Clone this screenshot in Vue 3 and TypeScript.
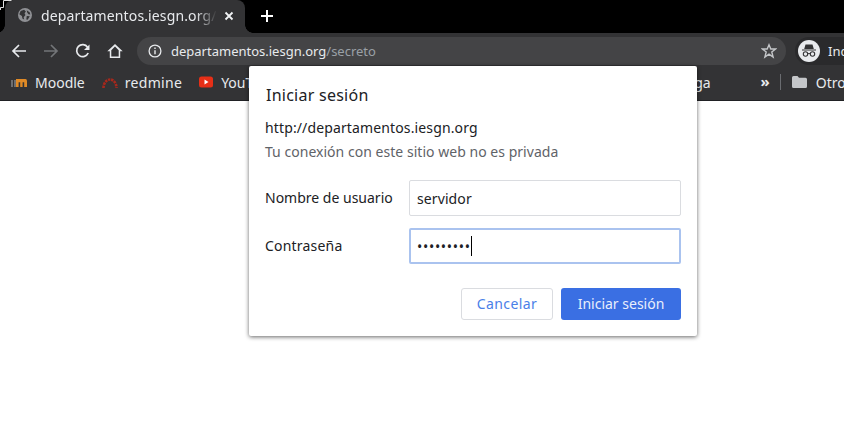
<script setup lang="ts">
const bookmarks = ['Moodle', 'redmine'];
</script>

<template>
  <div class="page">
    <div class="chrome">
      <div class="tabstrip">
        <svg class="corner" width="12" height="10" viewBox="0 0 12 10">
          <path d="M.5 10V7.5H3.5V.5H11.5" fill="none" stroke="#e0e0e0" stroke-width="1" />
        </svg>
        <div class="tab">
          <svg class="globe" width="14" height="14" viewBox="0 0 16 16">
            <circle cx="8" cy="8" r="8" fill="#8f9094" />
            <path d="M3 3.5 7 2 9 4 7.5 6 8.5 8 6.5 10.5 7 13 5 12 4.5 9 1.5 7ZM10 2.5 13.5 5 14 7.5 12 7 10.5 5ZM10 9 13.5 9.5 11 13.5 9.5 13Z" fill="#333335" />
          </svg>
          <span class="tab-title">departamentos.iesgn.org/</span>
          <svg class="close" width="10" height="10" viewBox="0 0 10 10">
            <path d="M1.5 1.5 8.5 8.5M8.5 1.5 1.5 8.5" stroke="#f1f3f4" stroke-width="1.8" />
          </svg>
        </div>
        <svg class="plus" width="14" height="14" viewBox="0 0 14 14">
          <path d="M7 1V13M1 7H13" stroke="#fff" stroke-width="2" />
        </svg>
      </div>
      <div class="toolbar">
        <svg class="tool" width="16" height="16" viewBox="0 0 16 16">
          <path d="M15 8H2.5M8 2 2 8 8 14" fill="none" stroke="#e8eaed" stroke-width="1.7" />
        </svg>
        <svg class="tool" width="16" height="16" viewBox="0 0 16 16">
          <path d="M1 8H13.5M8 2 14 8 8 14" fill="none" stroke="#737578" stroke-width="1.7" />
        </svg>
        <svg class="tool" width="16" height="16" viewBox="0 0 16 16">
          <path d="M13.2 10A6 6 0 1 1 12.6 4.2" fill="none" stroke="#e8eaed" stroke-width="1.7" />
          <path d="M14.5 1.5V7H9Z" fill="#e8eaed" />
        </svg>
        <svg class="tool" width="16" height="16" viewBox="0 0 16 16">
          <path d="M8 1 .3 8.3H2.8V15H13.2V8.3H15.7ZM4.3 13.5V7.2L8 3.5 11.7 7.2V13.5Z" fill="#e8eaed" />
        </svg>
        <div class="omnibox">
          <svg class="info" width="14" height="14" viewBox="0 0 14 14">
            <circle cx="7" cy="7" r="5.9" fill="none" stroke="#e8eaed" stroke-width="1.3" />
            <path d="M7 6.2V10.3M7 3.6V5" stroke="#e8eaed" stroke-width="1.4" />
          </svg>
          <span class="url">departamentos.iesgn.org<span class="url-path">/secreto</span></span>
          <svg class="star" width="16" height="16" viewBox="0 0 16 16">
            <path d="M8 1.8 9.8 6H14.6L10.8 9 12.1 14 8 11.2 3.9 14 5.2 9 1.4 6H6.2Z" fill="none" stroke="#c4c6c9" stroke-width="1.4" />
          </svg>
        </div>
        <div class="profile">
          <div class="avatar">
            <svg width="20" height="20" viewBox="0 0 20 20">
              <path d="M6.5 3.5H13.5L14.8 8H5.2ZM3 8.4H17V9.4H3Z" fill="#333335" />
              <circle cx="6.5" cy="13" r="2.2" fill="none" stroke="#333335" stroke-width="1.1" />
              <circle cx="13.5" cy="13" r="2.2" fill="none" stroke="#333335" stroke-width="1.1" />
              <path d="M8.7 12.6H11.3" stroke="#333335" stroke-width="1" />
            </svg>
          </div>
          <span class="profile-label">Incógnito</span>
        </div>
      </div>
      <div class="bookmarks">
        <div class="bookmark first">
          <svg width="16" height="12" viewBox="0 0 16 12">
            <path d="M0 4H2V11H0ZM3 4H5V11H3Z" fill="#6d6e70" />
            <path d="M5 3H14.5Q16 3 16 5V11H13.2V6.2H11.6V11H9.2V6.2H7.6V11H5Z" fill="#e08a26" />
          </svg>
          <span>{{ bookmarks[0] }}</span>
        </div>
        <div class="bookmark second">
          <svg width="18" height="14" viewBox="0 0 18 14">
            <path d="M2.5 13A6.5 8.5 0 0 1 15.5 13" fill="none" stroke="#a8281c" stroke-width="2.6" stroke-dasharray="2.4 .8" />
          </svg>
          <span>{{ bookmarks[1] }}</span>
        </div>
        <div class="bookmark third">
          <svg width="14" height="12" viewBox="0 0 14 12">
            <rect width="14" height="11" y=".5" rx="2.5" fill="#e62f17" />
            <path d="M5.5 3.5 9.5 6 5.5 8.5Z" fill="#fff" />
          </svg>
          <span>YouTube</span>
        </div>
        <span class="bookmark hidden-end">ga</span>
        <span class="chevrons">»</span>
        <span class="divider"></span>
        <div class="bookmark others">
          <svg width="15" height="12" viewBox="0 0 15 12">
            <path d="M0 1.5Q0 0 1.5 0H5.5L7 1.8H13.5Q15 1.8 15 3.3V10.5Q15 12 13.5 12H1.5Q0 12 0 10.5Z" fill="#c4c6c9" />
          </svg>
          <span>Otros marcadores</span>
        </div>
      </div>
    </div>

    <div class="dialog">
      <h1 class="title">Iniciar sesión</h1>
      <p class="origin">http://departamentos.iesgn.org</p>
      <p class="warning">Tu conexión con este sitio web no es privada</p>
      <div class="fields">
        <label class="label">Nombre de usuario</label>
        <div class="input">servidor</div>
        <label class="label wide">Contraseña</label>
        <div class="input focused"><span class="dots">•••••••••</span><span class="caret"></span></div>
      </div>
      <div class="actions">
        <button class="btn cancel">Cancelar</button>
        <button class="btn primary">Iniciar sesión</button>
      </div>
    </div>
  </div>
</template>

<style scoped>
.page {
  position: relative;
  width: 844px;
  height: 432px;
  overflow: hidden;
  background: #fff;
  font-family: "Noto Sans", "Open Sans", sans-serif;
}
.chrome {
  background: #333335;
}
.tabstrip {
  height: 33px;
  background: #000;
  display: flex;
  align-items: center;
  position: relative;
}
.corner {
  position: absolute;
  left: 0;
  top: 0;
  z-index: 1;
}
.tab {
  position: relative;
  margin-left: 5px;
  width: 240px;
  height: 33px;
  box-sizing: border-box;
  background: #333335;
  border-radius: 8px 8px 0 0;
  display: flex;
  align-items: center;
  padding-left: 13px;
}
.tab::before,
.tab::after {
  content: "";
  position: absolute;
  bottom: 0;
  width: 8px;
  height: 8px;
}
.tab::before {
  left: -8px;
  background: radial-gradient(circle at 0 0, transparent 7.5px, #333335 8px);
}
.tab::after {
  right: -8px;
  background: radial-gradient(circle at 100% 0, transparent 7.5px, #333335 8px);
}
.globe {
  flex: none;
  margin-top: -3px;
}
.tab-title {
  margin-left: 9px;
  width: 176px;
  flex: none;
  overflow: hidden;
  white-space: nowrap;
  font-size: 14px;
  letter-spacing: 0.13px;
  color: #e8eaed;
  margin-top: -3px;
  -webkit-mask-image: linear-gradient(to right, #000 88%, transparent 100%);
  mask-image: linear-gradient(to right, #000 88%, transparent 100%);
}
.close {
  margin-left: 7px;
  margin-top: -2px;
  flex: none;
}
.plus {
  margin-left: 15px;
  margin-top: -2px;
}
.toolbar {
  height: 33px;
  box-sizing: border-box;
  padding: 3px 0 0 11px;
  display: flex;
  align-items: center;
}
.tool {
  flex: none;
  margin-right: 16px;
}
.tool:nth-child(4) {
  margin-right: 14px;
}
.omnibox {
  width: 649px;
  height: 28px;
  border-radius: 14px;
  background: #444446;
  display: flex;
  align-items: center;
  padding: 0 9px 0 11px;
  box-sizing: border-box;
  flex: none;
}
.info {
  flex: none;
}
.url {
  margin-left: 9px;
  font-size: 13px;
  color: #e8eaed;
  white-space: nowrap;
  flex: 1;
}
.url-path {
  color: #9aa0a6;
}
.star {
  flex: none;
}
.profile {
  margin-left: 9px;
  height: 28px;
  padding: 0 14px 0 3px;
  display: flex;
  align-items: center;
  gap: 8px;
  border-radius: 14px 0 0 14px;
  background: #2a2a2c;
  flex: none;
  white-space: nowrap;
}
.avatar {
  width: 22px;
  height: 22px;
  border-radius: 50%;
  background: #e8eaed;
  display: flex;
  align-items: center;
  justify-content: center;
}
.profile-label {
  font-size: 13px;
  color: #e8eaed;
}
.bookmarks {
  height: 35px;
  box-sizing: border-box;
  border-bottom: 1px solid #202124;
  display: flex;
  align-items: center;
  white-space: nowrap;
  padding: 0 0 2px 11px;
  font-size: 14px;
  color: #e8eaed;
}
.bookmark {
  display: flex;
  align-items: center;
  gap: 8px;
  flex: none;
}
.second {
  margin-left: 16px;
  gap: 6px;
  letter-spacing: 0.3px;
}
.third {
  margin-left: 17px;
  width: 120px;
  overflow: hidden;
}
.hidden-end {
  margin-left: 375px;
}
.chevrons {
  margin-left: 50px;
  font-size: 15px;
  font-weight: 700;
  margin-top: -3px;
}
.divider {
  width: 1px;
  height: 16px;
  background: #6a6c70;
  margin-left: 10px;
  flex: none;
}
.others {
  margin-left: 11px;
  gap: 9px;
}
.dialog {
  position: absolute;
  left: 249px;
  top: 66px;
  width: 448px;
  height: 270px;
  box-sizing: border-box;
  padding: 16px 16px 0;
  background: #fff;
  border-radius: 2px;
  box-shadow: 0 1px 4px rgba(0, 0, 0, 0.6);
  color: #202124;
}
.title {
  margin: 0;
  font-size: 16px;
  line-height: 26px;
  font-weight: 400;
  letter-spacing: 0.25px;
  padding-left: 1px;
}
.origin {
  margin: 10px 0 0;
  font-size: 14px;
  line-height: 20px;
  letter-spacing: 0.13px;
}
.warning {
  margin: 4px 0 0;
  font-size: 14px;
  line-height: 20px;
  letter-spacing: 0.03px;
  color: #5f6368;
}
.fields {
  margin-top: 18px;
  display: grid;
  grid-template-columns: 144px 272px;
  grid-auto-rows: 36px;
  row-gap: 12px;
  align-items: center;
}
.label {
  font-size: 14px;
  padding-bottom: 2px;
}
.wide {
  letter-spacing: 0.2px;
}
.input {
  height: 36px;
  box-sizing: border-box;
  border: 1px solid #dadce0;
  border-radius: 2px;
  padding: 0 7px;
  display: flex;
  align-items: center;
  font-size: 14px;
  letter-spacing: 0.1px;
}
.focused {
  border: 2px solid #aac3ef;
  padding: 0 6px;
}
.dots {
  letter-spacing: 0.7px;
  font-size: 14px;
}
.caret {
  width: 1px;
  height: 20px;
  background: #000;
}
.actions {
  margin-top: 24px;
  display: flex;
  justify-content: flex-end;
  gap: 8px;
}
.btn {
  height: 32px;
  box-sizing: border-box;
  border-radius: 3px;
  font-family: inherit;
  font-size: 14px;
  padding: 0 0 1px;
}
.cancel {
  width: 92px;
  background: #fff;
  border: 1px solid #dadce0;
  color: #4a80e8;
  letter-spacing: 0.4px;
}
.primary {
  width: 120px;
  background: #3a6fe3;
  border: 0;
  color: #e8eefb;
}
</style>
